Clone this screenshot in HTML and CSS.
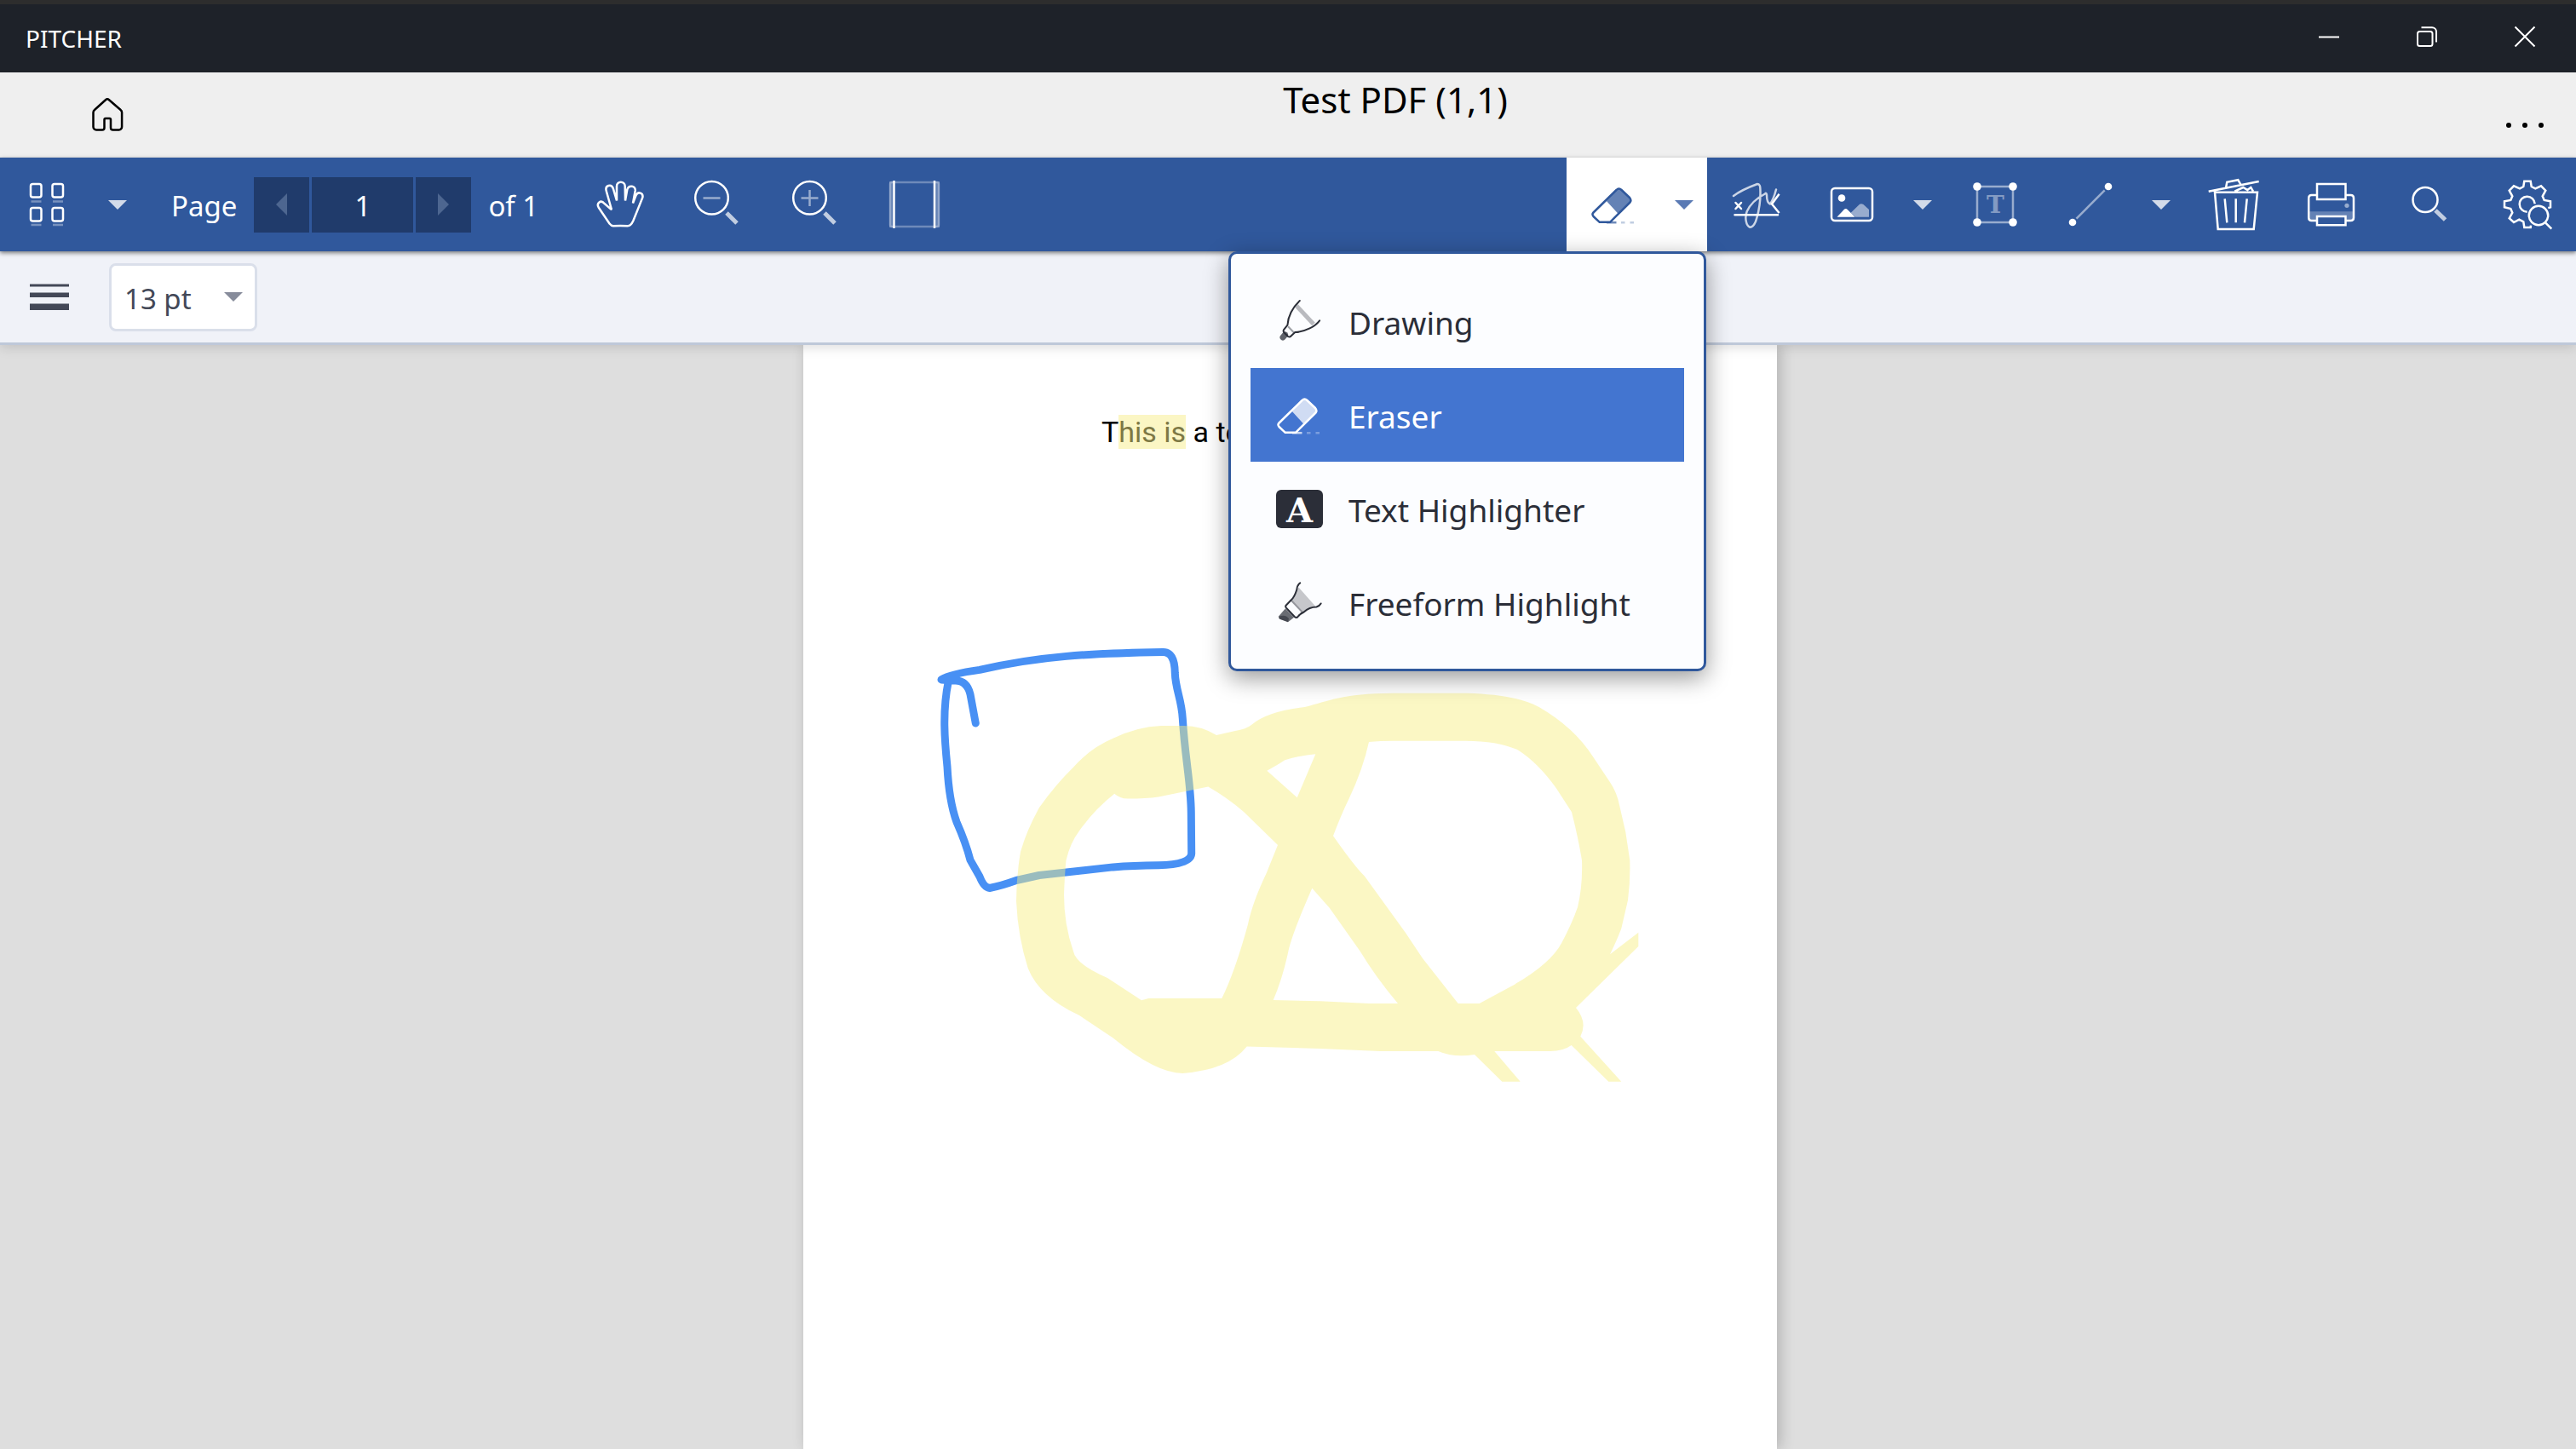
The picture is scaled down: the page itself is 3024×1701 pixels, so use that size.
FILE: index.html
```html
<!DOCTYPE html>
<html lang="en">
<head>
<meta charset="utf-8">
<title>PITCHER</title>
<link rel="stylesheet" href="styles.css">
</head>
<body>
<div class="titlebar">
  <span class="app-name">PITCHER</span>
  <div class="window-controls">
    <button class="win-btn" aria-label="Minimize"><svg class="win-icon" viewBox="0 0 24 24"><path d="M0 12.500H24"/></svg></button>
    <button class="win-btn" aria-label="Restore"><svg class="win-icon" viewBox="0 0 24 24"><rect x="1" y="6" width="17.500" height="17" rx="2.500"/><path d="M5.500 1.300H18a5 5 0 0 1 5 5V18.500"/></svg></button>
    <button class="win-btn" aria-label="Close"><svg class="win-icon" viewBox="0 0 24 24"><path d="M.5 .5l23 23M23.500 .5l-23 23"/></svg></button>
  </div>
</div>

<header class="header">
  <a class="home" href="#" aria-label="Home"><svg class="icon" viewBox="0 0 60 60"><path d="M28 12.200a3 3 0 0 1 4 0L45.600 24a4 4 0 0 1 1.500 3V44a3.500 3.500 0 0 1-3.500 3.500H36.500a2.500 2.500 0 0 1-2.500-2.500V35.500a1.500 1.500 0 0 0-1.500-1.500H28a1.500 1.500 0 0 0-1.500 1.500V45a2.500 2.500 0 0 1-2.500 2.500H17A3.500 3.500 0 0 1 13.500 44V27a4 4 0 0 1 1.500-3z"/></svg></a>
  <h1 class="doc-title">Test PDF (1,1)</h1>
  <button class="more" aria-label="More"><span class="dot"></span><span class="dot"></span><span class="dot"></span></button>
</header>

<div class="toolbar">
  <button class="tool tool-split" aria-label="Thumbnails"><svg class="icon" viewBox="0 0 60 60"><g class="w"><rect x="11" y="6" width="12.500" height="15.500" rx="2.500"/><rect x="36.500" y="6" width="12.500" height="15.500" rx="2.500"/><rect x="11" y="34" width="12.500" height="15.500" rx="2.500"/><rect x="36.500" y="34" width="12.500" height="15.500" rx="2.500"/></g><path class="w" opacity=".35" d="M11.500 26.500h12M37 26.500h12M11.500 54h12M37 54h12"/></svg></button>
  <button class="drop" aria-label="Thumbnail options"><span class="caret"></span></button>
  <div class="pager">
    <label for="page">Page</label>
    <div class="pager-box">
      <button class="step" aria-label="Previous page"><span class="arrow-left"></span></button>
      <input id="page" class="page-input" type="text" value="1">
      <button class="step" aria-label="Next page"><span class="arrow-right"></span></button>
    </div>
    <span>of 1</span>
  </div>
  <button class="tool" aria-label="Pan"><svg class="icon" viewBox="0 0 60 60"><path class="w" d="M5 34C1.500 28.500 7.500 24 11.500 29L19 35.500Q20 36 19.500 34.500L13.700 14C12 7.500 19.500 5.500 21.700 11L26 25.500V8.500C26 2 35.500 2 35.700 8.500L36 25.500 38.300 12.500C40 6.500 48.500 8 47.700 14L45 28.500 48.500 19.500C51 14 57.500 16.500 56.300 22L45.300 49.300Q42.500 55.500 38.500 55.300Q30 54.500 22 55.300Q19.500 55 17.500 52.500Z"/></svg></button>
  <button class="tool" aria-label="Zoom out"><svg class="icon" viewBox="0 0 60 60"><circle class="w" cx="22.500" cy="22.300" r="19.300"/><path class="w" opacity=".5" stroke-width="3" d="M12.500 22.500h20"/><path class="w handle" d="M40 40L52 52"/></svg></button>
  <button class="tool" aria-label="Zoom in"><svg class="icon" viewBox="0 0 60 60"><circle class="w" cx="22.500" cy="22.300" r="19.300"/><path class="w" opacity=".5" stroke-width="3" d="M12.500 22.500h20M22.500 13v19"/><path class="w handle" d="M40 40L52 52"/></svg></button>
  <button class="tool" aria-label="Fit page"><svg class="icon" viewBox="0 0 60 60"><rect class="w" opacity=".3" x="2" y="4" width="57" height="52" rx="2"/><path fill="#fff" opacity=".25" d="M1 3h5v54H1zM55 3h5v54h-5z"/><path class="w" d="M6.500 2v56M54 2v56"/></svg></button>

  <div class="tools-right">
    <div class="active-tool">
      <button class="tool tool-split" aria-label="Eraser"><svg class="icon" viewBox="0 0 60 60"><use href="#eraser"/></svg></button>
      <button class="drop" aria-label="Annotation tools"><span class="caret caret-blue"></span></button>
      <div class="menu" role="menu">
        <button class="menu-item" role="menuitem"><svg class="icon" viewBox="0 0 60 60"><path stroke="#2b2e38" opacity=".32" stroke-width="5" d="M27 12L47 33.500"/><path stroke="#2b2e38" opacity=".45" stroke-width="2" d="M17.100 36.300L24 43.500"/><path stroke="#2b2e38" opacity=".75" stroke-width="7" stroke-linecap="round" d="M11 49L13.500 46"/><path class="ink" d="M30.800 6C22 14.500 17 25 16.400 34.700L12 40.200Q11 42 12.500 43.500L17 48Q19 49.300 20.500 47.500L25.300 43C38 42.500 49 36 54.100 29.300"/></svg><span>Drawing</span></button>
        <button class="menu-item selected" role="menuitem"><svg class="icon" viewBox="0 0 60 60"><g id="eraser"><path fill="currentColor" stroke="none" opacity=".75" d="M21.900 26L33.500 13Q36.400 10 39.500 13L49 22Q51.500 25 49 28L35.200 40.500z"/><path stroke="currentColor" stroke-width="2.500" stroke-linejoin="round" fill="none" d="M33.500 13Q36.400 10 39.500 13L49 22Q51.500 25 49.500 27.500L26 50.800H13.800L6.500 44Q4.500 41.500 6.500 39.500z"/><path stroke="currentColor" stroke-width="2.500" opacity=".7" d="M22 51.200H33.500"/><path stroke="currentColor" stroke-width="2.500" opacity=".3" d="M39 51.200h4.500M49.500 51.200h4.500"/></g></svg><span>Eraser</span></button>
        <button class="menu-item" role="menuitem"><svg class="icon" viewBox="0 0 60 60"><rect x="3" y="8" width="55" height="45" rx="6" fill="#2b2e38"/><text class="glyph-a" x="30.500" y="45.500">A</text></svg><span>Text Highlighter</span></button>
        <button class="menu-item" role="menuitem"><svg class="icon" viewBox="0 0 60 60"><path fill="#2b2e38" opacity=".26" d="M29.500 12.500L49 34.500 34.500 40.700 21.600 27.300Q26.500 21 27.500 15z"/><path stroke="#2b2e38" opacity=".5" stroke-width="2" d="M20.800 27.800L33.800 41.500"/><path fill="#2b2e38" opacity=".7" d="M13.800 37.500L6 46.500Q5.500 49 8 50L17 53.300 24 47.800z"/><path fill="#2b2e38" opacity=".6" d="M7 46.500Q14 44 18 49L17 53.300 7 49.500z"/><path class="ink" d="M31.200 7.300Q27.800 9.500 27.200 15.500Q24.500 24 20.800 27.300L14.600 33.700Q13.500 35 15 36.700L24.500 46.800Q26 48.500 28.200 47.500Q31 43.500 35.600 41.500C41 36.500 46 35.500 50.400 35.500Q54 34.500 55.600 31.500"/></svg><span>Freeform Highlight</span></button>
      </div>
    </div>
    <button class="tool" aria-label="Signature"><svg class="icon" viewBox="0 0 60 60"><path class="w" opacity=".75" stroke-width="4" stroke-linecap="round" stroke-linejoin="round" d="M3 20Q12 13 31 6Q34.500 6 34.400 12C35 25 33 38 29 50Q26 57 22.300 56.700C17.500 55 16 45 18.700 38.300Q24 26 40 17.500Q41.500 15.500 42 19Q42 28 45.900 29.500Q50 24 53 12.500"/><path class="w" stroke-width="1.500" d="M56.600 17.700L48 29.500 56.600 40"/><path class="w" stroke-width="3" stroke-linecap="round" d="M4.500 42.300H55M5.500 28l6.500 7M12 28l-6.500 7"/></svg></button>
    <button class="tool tool-split" aria-label="Image"><svg class="icon" viewBox="0 0 60 60"><rect class="w" x="6" y="11" width="48" height="38" rx="4"/><circle cx="18" cy="22.500" r="4.300" fill="#fff"/><path fill="#fff" d="M12.500 44.700L20.500 36.200Q22.800 34 25 36.200L33.500 44.700z"/><path fill="#fff" opacity=".5" d="M28.500 40L39 29.800Q41 28.500 43.500 30L50 36V44.700H34z"/></svg></button>
    <button class="drop" aria-label="Image options"><span class="caret"></span></button>
    <button class="tool" aria-label="Text box"><svg class="icon" viewBox="0 0 60 60"><path class="w" opacity=".5" d="M9 9H51V51H9z"/><g fill="#fff"><circle cx="9" cy="9" r="4.800"/><circle cx="51" cy="9" r="4.800"/><circle cx="9" cy="51" r="4.800"/><circle cx="51" cy="51" r="4.800"/></g><text class="glyph-t" x="30.500" y="40">T</text></svg></button>
    <button class="tool tool-split" aria-label="Line"><svg class="icon" viewBox="0 0 60 60"><path class="w" opacity=".5" d="M13.500 46.700L46.700 13.300"/><circle cx="51" cy="9" r="4.300" fill="#fff"/><circle cx="9" cy="51" r="4.300" fill="#fff"/></svg></button>
    <button class="drop" aria-label="Line options"><span class="caret"></span></button>
    <button class="tool" aria-label="Delete"><svg class="icon" viewBox="0 0 60 60"><path class="w" d="M8 15.700H58L53.700 59H11.700zM.7 14.700L59.700 3M21 10.700L22.300 3.700 35.300 1.200 38.300 6.500M31.300 14.700L41.300 10 46.300 13 50.300 10 53 14.700M19.700 23.300L22.300 51.300M32.700 23.300V51.300M45.700 23.300L43 51.300"/></svg></button>
    <button class="tool" aria-label="Print"><svg class="icon" viewBox="0 0 60 60"><path fill="#fff" opacity=".25" d="M3 38.300H56V47q0 2-2 2H46.500V43.500H13V49H5q-2 0-2-2z"/><path class="w" d="M13 19H6.500Q3.200 19 3.200 22.500V45.500Q3.200 49 6.500 49H13M46.500 19H52.500Q56 19 56 22.500V45.500Q56 49 52.500 49H46.500M13 6H46.500V24H13zM13 44H46.500V54.200H13z"/><circle cx="48" cy="31.300" r="2.600" fill="#fff" opacity=".5"/></svg></button>
    <button class="tool" aria-label="Search"><svg class="icon" viewBox="0 0 60 60"><circle class="w" cx="25" cy="24.500" r="14.500"/><path class="w handle" d="M37 37L48.500 48"/></svg></button>
    <button class="tool" aria-label="Settings"><svg class="icon" viewBox="0 0 60 60"><path class="w" d="M54.300 34L57 33.300V26.300L49.700 25 47.700 20.300 51.300 13.700 46 8.300 39.300 11.300 34.700 9 33.700 2.700H26.300L25.300 9 21 11.300 14 8.300 8.700 13.700 12.300 20.300 10.300 25 3 26.300V33.300L10.300 35 12.300 39.700 8.700 46.300 14 51 20.300 47.700 25.300 50.300 26.300 57H33.700L34 54.700M38.700 29.300A9 9 0 1 0 29.700 38.700M51.300 51.700L58.300 58.700"/><circle class="w" cx="43" cy="43" r="11.200"/></svg></button>
  </div>
</div>

<div class="options">
  <svg class="weight-icon" viewBox="0 0 46 32" role="img" aria-label="Line thickness"><path fill="#434857" d="M0 .5h46v3H0zM0 10.500h46v5.500H0zM0 23.500h46v7.500H0z"/></svg>
  <div class="select-wrap">
    <select class="size-select" aria-label="Line thickness"><option>13 pt</option></select>
    <span class="caret caret-grey"></span>
  </div>
</div>

<main class="viewer">
  <div class="page">
    <p class="page-text">T<mark>his is</mark> a test PDF</p>
    <svg class="annotations" viewBox="0 0 840 540" aria-hidden="true">
      <path fill="none" stroke="#4890f4" stroke-width="9" stroke-linecap="round" stroke-linejoin="round" d="M85.300 109L79 75Q75 58 60 59L45 57.900Q56 51 90 46.400C160 30 220 27 305 25.500Q319 25 319.300 50C320 70 327 80 328.300 103.600C331 150 338 179 338.300 214L338.700 262Q338 275 300 275.700Q270 276 246.700 277.900L160 287.500 133 293.500Q115 300 101.700 302.500Q95 302 90 289L79 269.600Q74 250 63 225Q54 200 52 160C49 130 46 95 53.300 60"/>
      <path fill="rgb(246,238,130)" fill-opacity=".47" fill-rule="evenodd" d="M368 123L390 118Q403 116 409 111Q427 95 471.700 90C500 83 515 74 575 73.700H661.700C700 75 725 79 746.700 90Q788 114 810 148.300L830 178.300Q838 190 841 205L848.300 236.700 853.300 270Q854 295 851 316.700L843.300 350Q838 364 830 380.300L863.300 354.700V371L790 443Q804 460 795.300 476.700L843.300 529.700H828.300L784.700 487Q775 494 760 494H694.300L724.700 529.700H703.300L671 498Q647 502 628.300 494H560L490 491 403.700 488.600Q382 516 328.300 520Q297 520 246.700 478.600L206.700 451.800Q160 430 146.700 396.400Q135 360 133 318Q133 290 138 260Q145 235 160 207.900Q180 180 200 160.700Q220 138 246.700 126.800Q275 113 303.300 112H330Q350 112 368 123zM248.300 191.800Q255 198 265 197.500 285 197.500 300 195.500L358.300 183.600Q380 196 400 213L440 252 426.700 285Q410 320 405 345Q390 400 374.300 432H288.300L280 434.300 240 407.900Q203 392 200 376.800Q189 345 189 310Q190 285 191.500 270Q196 250 206.700 235.700Q225 210 248.300 191.800zM427.300 164.700Q440 158 448.300 152.300Q465 147 484.300 145.300L462.700 196.300zM480.300 302.700L500.700 325.700 536.700 376.700Q555 407 581 438H546.700L490 435.300 434.700 434Q445 410 451.700 380Q455 360 480.300 302.700zM547 131Q560 129.700 576.700 129.700H660Q700 130 722 140.500Q745 155 766.700 185L785 213.300Q793 245 797 270Q798 300 792 325Q785 345 773.300 366.700Q760 392 713.300 418.300L676.700 438H651.700L610 385 590 355 541.700 288.300Q530 277 505 241.300Q515 215 523.300 198.300Q540 163 547 131z"/>
    </svg>
  </div>
</main>
</body>
</html>
```
FILE: styles.css
```css
* { box-sizing: border-box; }

body {
  margin: 0;
  min-height: 100vh;
  display: flex;
  flex-direction: column;
  font-family: "Noto Sans", "Open Sans", sans-serif;
  background: #dedede;
}

button {
  margin: 0;
  padding: 0;
  border: 0;
  background: none;
  color: inherit;
  font: inherit;
}

svg { display: block; fill: none; }

.icon { width: 60px; height: 60px; flex: none; overflow: visible; }

.w { stroke: #fff; stroke-width: 2.5; }
.handle { stroke-width: 5; opacity: .7; stroke-linecap: butt; }
.ink { stroke: #2b2e38; stroke-width: 2; stroke-linecap: round; stroke-linejoin: round; }

.titlebar {
  height: 85px;
  padding: 0 3px 5px 30px;
  border-top: 5px solid #2d2d2d;
  display: flex;
  align-items: center;
  justify-content: space-between;
  background: #1e2229;
  color: #fff;
}

.app-name { font-size: 28px; line-height: 40px; padding-top: 5px; }
.window-controls { display: flex; }
.win-btn { width: 115px; display: grid; place-items: center; }
.win-icon { width: 24px; height: 24px; stroke: #fff; stroke-width: 2; overflow: visible; }

.header {
  height: 100px;
  display: grid;
  grid-template-columns: 252px 1fr;
  background: #efefef;
  color: #000;
}

.home { width: 252px; display: grid; place-items: center; stroke: #000; stroke-width: 2.5; }

.doc-title {
  grid-area: 1 / 2;
  justify-self: center;
  margin: 4px 0 0;
  font-size: 42px;
  line-height: 56px;
  font-weight: 400;
}

.more {
  grid-area: 1 / 2;
  justify-self: end;
  align-self: end;
  display: flex;
  gap: 13px;
  padding: 34px 38px 35px;
}

.dot { width: 6px; height: 6px; border-radius: 50%; background: #000; }

.toolbar {
  position: relative;
  z-index: 2;
  height: 110px;
  display: flex;
  background: #30589c;
  color: #fff;
  box-shadow: 0 2px 5px rgba(0, 0, 0, .5);
}

.tool { width: 115px; display: grid; place-items: center; }
.tool-split { width: 110px; }
.drop { width: 55px; display: grid; place-items: center; }

.caret {
  border: 11px solid transparent;
  border-top-color: #d3dbe9;
  border-bottom: 0;
}

.caret-blue { border-top-color: #5a7ab4; }
.caret-grey { border-top-color: #878c9b; }

.pager {
  width: 505px;
  padding-left: 36px;
  display: flex;
  align-items: center;
  gap: 20px;
  font-size: 33px;
}

.pager label, .pager > span { padding-top: 3px; }

.pager-box { display: flex; gap: 3px; height: 65px; }
.step, .page-input { background: #203b6b; }
.step { width: 65px; display: grid; place-items: center; }

.page-input {
  width: 119px;
  padding: 3px 0 0;
  border: 0;
  color: #fff;
  font: inherit;
  text-align: center;
}

.arrow-left, .arrow-right { border: 13px solid transparent; }
.arrow-left { border-left: 0; border-right-color: #4d6690; }
.arrow-right { border-right: 0; border-left-color: #4d6690; }

.tools-right { margin-left: auto; display: flex; }

.active-tool {
  position: relative;
  display: flex;
  background: #fff;
  color: #30589c;
}

.menu {
  position: absolute;
  top: 100%;
  right: 1px;
  width: 561px;
  padding: 24px 23px 23px;
  border: 3px solid #30589c;
  border-radius: 10px;
  background: #fcfdff;
  color: #2b2e38;
  box-shadow: 0 8px 28px rgba(0, 0, 0, .4);
}

.menu-item {
  width: 100%;
  height: 110px;
  padding: 0 27px;
  display: flex;
  align-items: center;
  gap: 28px;
  font-size: 37px;
  white-space: nowrap;
}

.menu-item span { padding-top: 3px; }

.selected { background: #4375d0; color: #fff; }

.glyph-a, .glyph-t { font-family: "DejaVu Serif", serif; font-weight: 700; text-anchor: middle; fill: #fff; }
.glyph-a { font-size: 40px; }
.glyph-t { font-size: 28px; opacity: .4; }

.options {
  position: relative;
  z-index: 1;
  height: 110px;
  padding: 0 35px;
  display: flex;
  align-items: center;
  gap: 47px;
  background: #f0f2f8;
  border-bottom: 3px solid #bec8d9;
  box-shadow: 0 2px 14px rgba(0, 0, 0, .15);
}

.weight-icon { width: 46px; height: 32px; }
.select-wrap { display: grid; align-items: center; }
.select-wrap > * { grid-area: 1 / 1; }
.select-wrap .caret { justify-self: end; margin-right: 17px; pointer-events: none; }

.size-select {
  appearance: none;
  width: 174px;
  height: 80px;
  padding: 3px 15px 0;
  border: 3px solid #dadfea;
  border-radius: 8px;
  background: #fff;
  color: #434857;
  font: inherit;
  font-size: 33px;
}

.viewer {
  flex: 1;
  display: flex;
  justify-content: center;
  padding-left: 5px;
}

.page {
  position: relative;
  width: 1143px;
  background: #fff;
  box-shadow: 4px 0 16px rgba(0, 0, 0, .2);
}

.page-text {
  margin: 78px 0 0 350px;
  font-family: Roboto, sans-serif;
  font-size: 34px;
  line-height: 48px;
  color: #000;
}

mark { background: #fbf6c4; color: #7d7844; }

.annotations {
  position: absolute;
  left: 117px;
  top: 335px;
  width: 840px;
  height: 540px;
  overflow: visible;
}
```
